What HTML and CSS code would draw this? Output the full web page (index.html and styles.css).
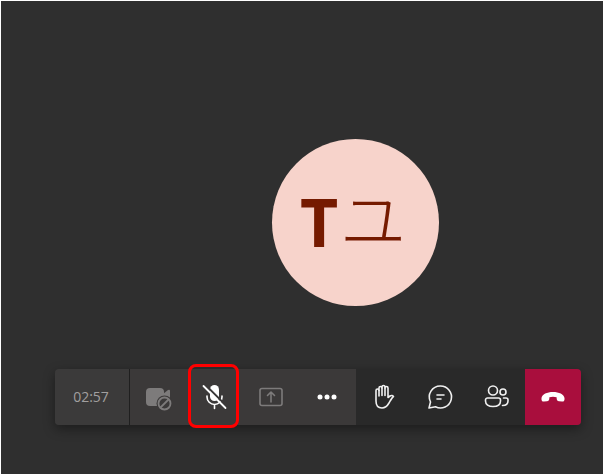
FILE: index.html
```html
<!DOCTYPE html>
<html lang="en">
<head>
  <meta charset="UTF-8">
  <meta name="viewport" content="width=device-width, initial-scale=1.0">
  <title>Meeting</title>
  <link rel="stylesheet" href="styles.css">
</head>
<body>
  <main class="stage">
    <div class="avatar"><span class="initial">T</span><span class="initial-ja" lang="ja">ユ</span></div>
  </main>

  <div class="toolbar" role="toolbar" aria-label="Call controls">
    <div class="timer">02:57</div>

    <button class="btn btn-muted" type="button" aria-label="Camera unavailable">
      <svg class="icon" viewBox="0 0 28 28">
        <rect x="2" y="5" width="18" height="18" rx="4" fill="currentColor"/>
        <path d="M19 11l5-4q2-1 2 1v12l-7-3z" fill="currentColor"/>
        <circle cx="20.5" cy="20.5" r="8" fill="#3b3939"/>
        <circle cx="20.5" cy="20.5" r="6" fill="none" stroke="currentColor" stroke-width="1.8"/>
        <path d="M16.5 24.5l8-8" stroke="currentColor" stroke-width="1.8"/>
      </svg>
    </button>

    <button class="btn" type="button" aria-label="Unmute">
      <svg class="icon" viewBox="0 0 28 28">
        <rect x="9" y="2" width="9" height="16" rx="4.5" fill="currentColor"/>
        <path d="M6 13v1a7.5 7.5 0 0 0 15 0v-1M13.5 21.5v4" fill="none" stroke="currentColor" stroke-width="1.6" stroke-linecap="round"/>
        <path d="M4 1.5l22 22" stroke="#3b3939" stroke-width="2"/>
        <path d="M2.5 3l22 22" stroke="currentColor" stroke-width="1.8" stroke-linecap="round"/>
      </svg>
      <span class="marker"></span>
    </button>

    <button class="btn btn-muted" type="button" aria-label="Share screen">
      <svg class="icon" viewBox="0 0 28 28" fill="none" stroke="currentColor" stroke-width="1.6" stroke-linecap="round" stroke-linejoin="round">
        <rect x="3" y="5.5" width="22" height="17" rx="2"/>
        <path d="M14 19V9M10.5 12.5L14 9l3.5 3.5"/>
      </svg>
    </button>

    <button class="btn" type="button" aria-label="More actions">
      <svg class="icon" viewBox="0 0 28 28" fill="currentColor">
        <circle cx="7" cy="14" r="2.5"/>
        <circle cx="14" cy="14" r="2.5"/>
        <circle cx="21" cy="14" r="2.5"/>
      </svg>
    </button>

    <button class="btn btn-dark" type="button" aria-label="Raise hand">
      <svg class="icon" viewBox="0 0 28 28" fill="none" stroke="currentColor" stroke-width="1.6" stroke-linecap="round" stroke-linejoin="round">
        <path d="M6 18V7.5a1.5 1.5 0 0 1 3 0V5a1.5 1.5 0 0 1 3 0V4a1.5 1.5 0 0 1 3 0v1a1.5 1.5 0 0 1 3 0v9.5l2-1.5c1.5-1 3-.5 3.5.5-1.5 1-3 4-4.5 6.5-2 3.500-4 5-7 5-4 0-6-3-6-7z"/>
        <path d="M9 7.5V13M12 5v7.5M15 5v7.5"/>
      </svg>
    </button>

    <button class="btn btn-dark" type="button" aria-label="Show conversation">
      <svg class="icon" viewBox="0 0 28 28" fill="none" stroke="currentColor" stroke-width="1.6" stroke-linecap="round" stroke-linejoin="round">
        <path d="M14.5 3a11 11 0 1 1-5 20.800L3 25l1.5-6A11 11 0 0 1 14.5 3z"/>
        <path d="M11 12h7M11 16h4"/>
      </svg>
    </button>

    <button class="btn btn-dark" type="button" aria-label="Show participants">
      <svg class="icon" viewBox="0 0 28 28" fill="none" stroke="currentColor" stroke-width="1.6" stroke-linecap="round" stroke-linejoin="round">
        <circle cx="11" cy="7.5" r="4.5"/>
        <circle cx="21" cy="9" r="3"/>
        <path d="M5.5 15h11a2 2 0 0 1 2 2v1c0 3.5-3 5.5-7.5 5.5s-7.500-2-7.500-5.500v-1a2 2 0 0 1 2-2z"/>
        <path d="M21.5 15H24a2 2 0 0 1 2 2v1c0 3-2 4.500-5.500 4.500"/>
      </svg>
    </button>

    <button class="btn btn-leave" type="button" aria-label="Leave call">
      <svg class="icon" viewBox="0 0 28 28" fill="currentColor">
        <path d="M14 9c6 0 11 2.200 11.500 6 .3 2.500-.7 3.800-2.500 3.600l-3-.4c-1.500-.2-2.200-1-2.300-2.500l-.1-1.400c-2.200-.8-5-.8-7.200 0l-.1 1.400c-.1 1.500-.8 2.300-2.300 2.500l-3 .4c-1.800.2-2.800-1.100-2.500-3.600C3 11.200 8 9 14 9z"/>
      </svg>
    </button>
  </div>
</body>
</html>
```
FILE: styles.css
```css
* {
  margin: 0;
  padding: 0;
  box-sizing: border-box;
}

body {
  display: flex;
  flex-direction: column;
  min-height: 100vh;
  padding-bottom: 49px;
  border-top: 1px solid #ffffff;
  border-left: 1px solid #ffffff;
  background: #2f2f2f;
  font-family: "Open Sans", "Noto Sans CJK JP", sans-serif;
}

.stage {
  flex: 1;
  display: flex;
  align-items: center;
  justify-content: center;
  padding: 74px 0 0 106px;
}

.avatar {
  display: flex;
  align-items: center;
  justify-content: center;
  width: 167px;
  height: 167px;
  padding: 0 4px 2px 0;
  border-radius: 50%;
  background: #f7d3cb;
  color: #751a00;
  font-size: 66px;
  line-height: 72px;
}

.initial {
  font-weight: 700;
}

.initial-ja {
  padding: 0 0 10px 2px;
  font-family: "Noto Sans CJK JP", sans-serif;
  font-weight: 300;
}

.toolbar {
  display: flex;
  height: 56px;
  margin: 0 22px 0 54px;
  border-radius: 4px;
  box-shadow: 0 4px 12px rgba(0, 0, 0, 0.4);
}

.timer {
  display: flex;
  align-items: center;
  justify-content: center;
  width: 75px;
  padding: 0 2px 2px 0;
  border-right: 1px solid #1f1f1f;
  border-radius: 4px 0 0 4px;
  background: #3b3a3a;
  color: #a19f9f;
  font-size: 14px;
  font-weight: 500;
}

.btn {
  position: relative;
  display: flex;
  flex: 1;
  align-items: center;
  justify-content: center;
  border: none;
  background: #3b3939;
  color: #ffffff;
  cursor: pointer;
}

.btn-muted {
  color: #7d7b7b;
}

.btn-dark {
  background: #292929;
  color: #f0f0f0;
}

.btn-leave {
  border-radius: 0 4px 4px 0;
  background: #a90e3d;
}

.icon {
  width: 28px;
  height: 28px;
}

/* highlight frame around the mute button */
.marker {
  position: absolute;
  z-index: 1;
  inset: -5px 4px -3px 2px;
  border: 3px solid #ff0000;
  border-radius: 8px;
}
```
